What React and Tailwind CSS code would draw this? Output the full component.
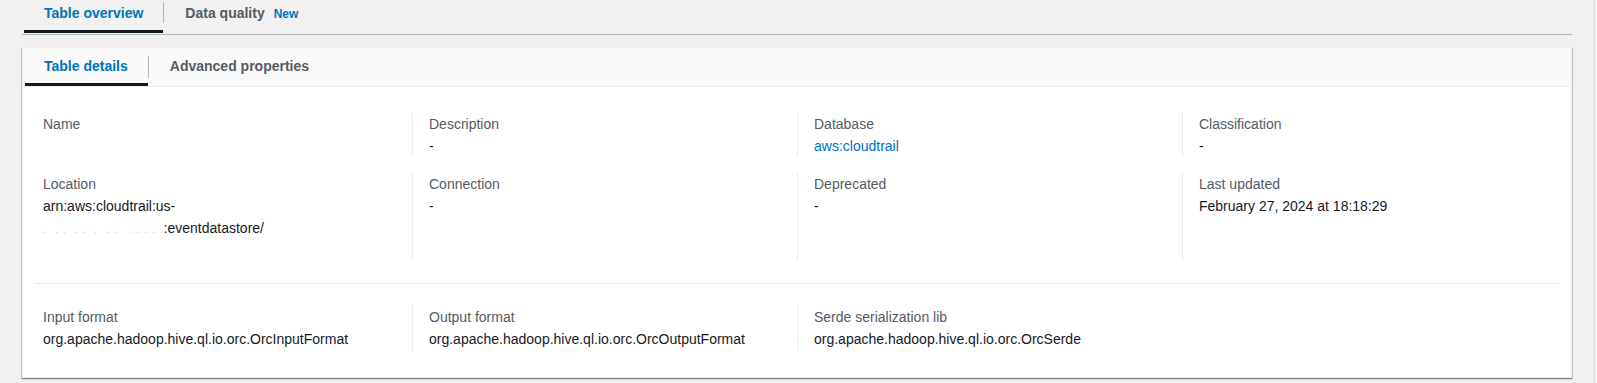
import React from 'react';

const font = "font-['Liberation_Sans',Arial,sans-serif]";

const Field = ({ label, children, first }) => (
    <div className={`pl-4 pr-4 ${first ? '' : 'border-l border-[#eaeded]'}`}>
        <div className="text-[14px] leading-[22px] text-[#545b64]">{label}</div>
        <div className="text-[14px] leading-[22px] text-[#16191f]">{children}</div>
    </div>
);

const App = () => {
    return (
        <div className={`flex min-h-screen bg-[#f0f1f0] ${font}`}>
            <div className="flex-1 px-[22px]">
                {/* Top tabs */}
                <div className="flex items-start border-b border-[#aab7b8] pl-[2px]">
                    <button className="-mb-px border-b-[3px] border-[#16191f] px-[20px] pt-[3px] pb-[7px] text-[14px] font-bold leading-[20px] text-[#0073bb]">
                        Table overview
                    </button>
                    <span className="mt-[2px] h-[21px] w-px bg-[#aab7b8]" />
                    <button className="flex items-baseline gap-[9px] px-[21px] pt-[3px] pb-[10px] text-[14px] font-bold leading-[20px] text-[#545b64]">
                        <span>Data quality</span>
                        <span className="text-[12px] text-[#0073bb]">New</span>
                    </button>
                </div>

                {/* Card */}
                <div className="mt-[12px] border border-[#eaeded] bg-white shadow-[0_1px_1px_0_rgba(0,28,36,0.3),1px_1px_1px_0_rgba(0,28,36,0.15),-1px_1px_1px_0_rgba(0,28,36,0.15)]">
                    <div className="flex items-start border-b border-[#eaeded] bg-[#fafafa] pl-[2px]">
                        <button className="-mb-px border-b-[3px] border-[#16191f] pl-[19px] pr-[20px] pt-[8px] pb-[7px] text-[14px] font-bold leading-[20px] text-[#0073bb]">
                            Table details
                        </button>
                        <span className="mt-[8px] h-[22px] w-px bg-[#aab7b8]" />
                        <button className="px-[21px] pt-[8px] pb-[10px] text-[14px] font-bold leading-[20px] text-[#545b64]">
                            Advanced properties
                        </button>
                    </div>

                    <div className="px-[4px] pt-[26px] pb-[27px]">
                        <div className="grid grid-cols-4 gap-y-4">
                            <Field label="Name" first>
                                <span>&nbsp;</span>
                            </Field>
                            <Field label="Description">-</Field>
                            <Field label="Database">
                                <a className="text-[#0073bb]">aws:cloudtrail</a>
                            </Field>
                            <Field label="Classification">-</Field>

                            <Field label="Location" first>
                                <div>arn:aws:cloudtrail:us-</div>
                                <div>
                                    <span className="text-[#d9dcdc]">. &nbsp;. . &nbsp;. . &nbsp;. &nbsp;. . &nbsp; . . . . .</span>
                                    <span>:eventdatastore/</span>
                                </div>
                                <div>&nbsp;</div>
                            </Field>
                            <Field label="Connection">-</Field>
                            <Field label="Deprecated">-</Field>
                            <Field label="Last updated">February 27, 2024 at 18:18:29</Field>
                        </div>

                        <div className="mx-[8px] mt-[22px] mb-[22px] h-px bg-[#eaeded]" />

                        <div className="grid grid-cols-4">
                            <Field label="Input format" first>
                                org.apache.hadoop.hive.ql.io.orc.OrcInputFormat
                            </Field>
                            <Field label="Output format">
                                org.apache.hadoop.hive.ql.io.orc.OrcOutputFormat
                            </Field>
                            <Field label="Serde serialization lib">
                                org.apache.hadoop.hive.ql.io.orc.OrcSerde
                            </Field>
                            <div />
                        </div>
                    </div>
                </div>
            </div>
            <div className="w-px bg-[#d5dbdb]" />
            <div className="w-[2px] bg-[#f4f5f5]" />
        </div>
    );
};

export default App;
